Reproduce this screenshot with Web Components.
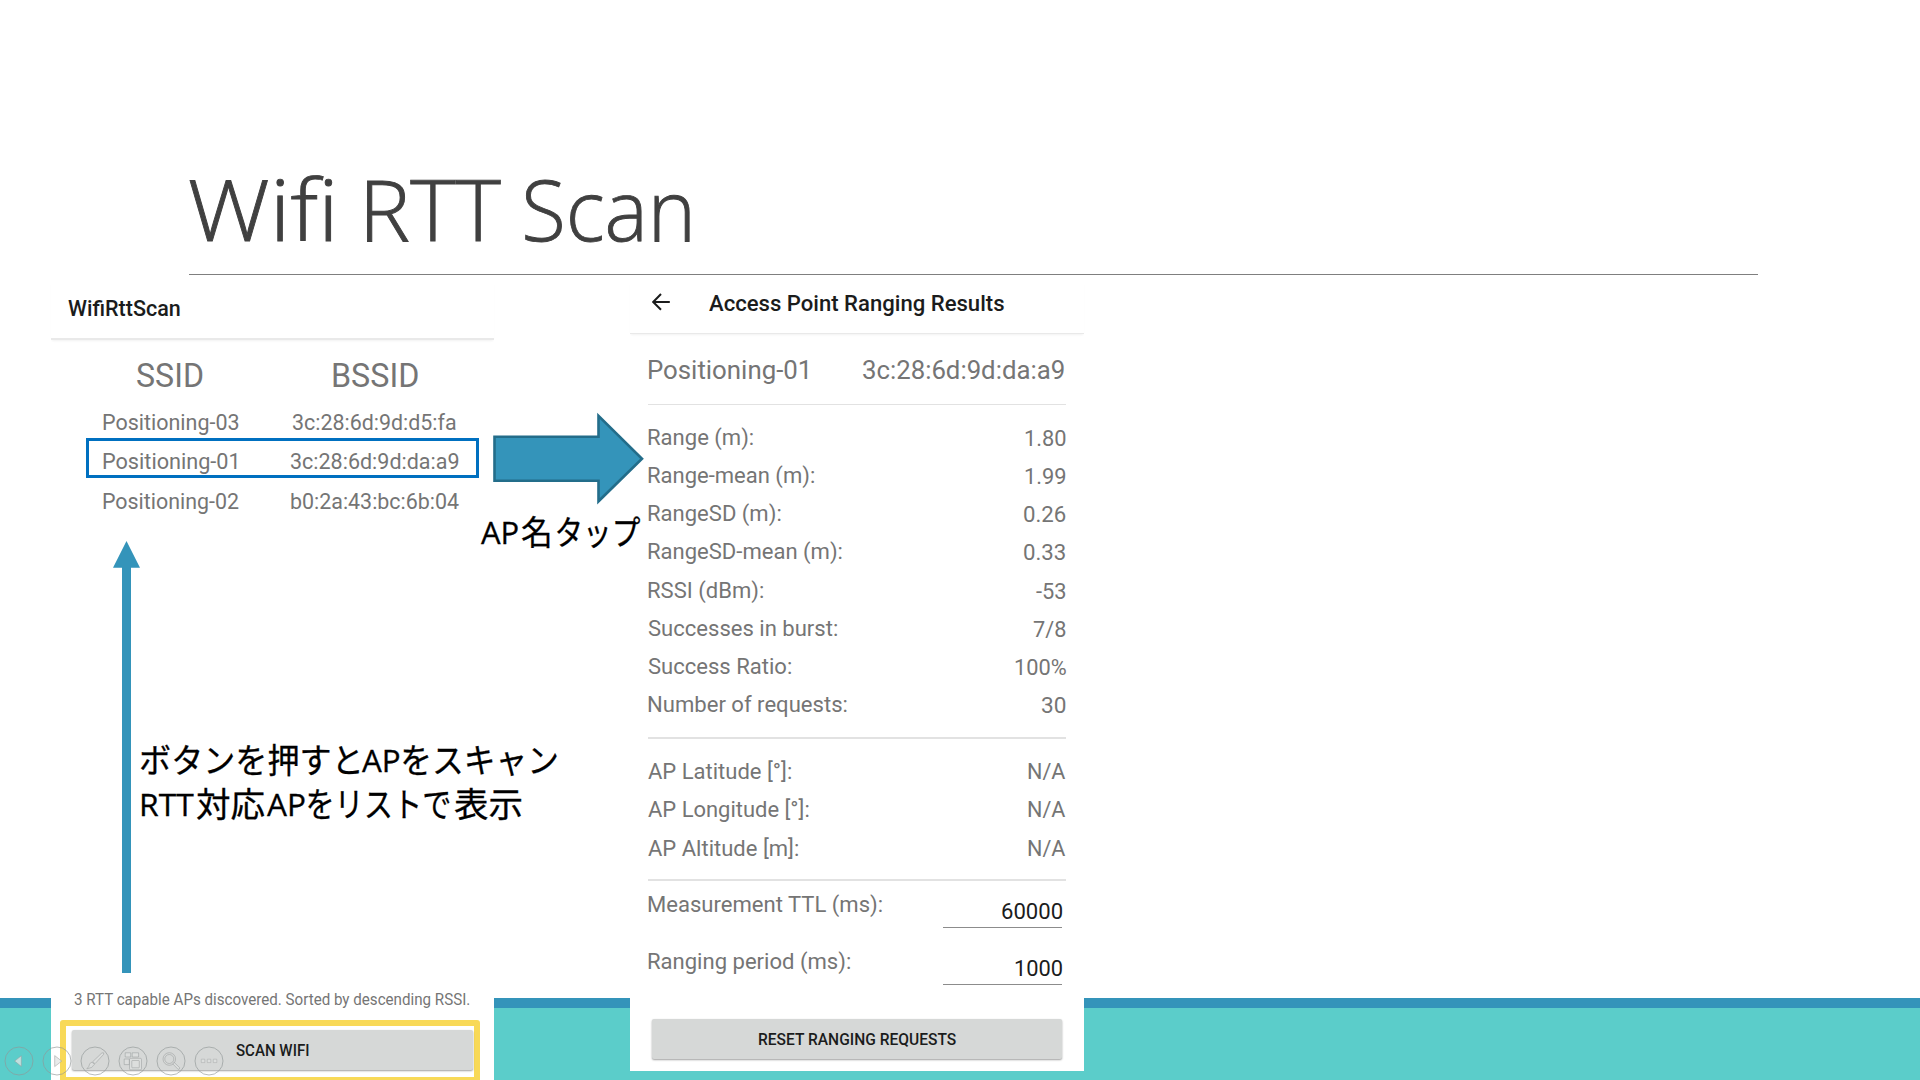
<!DOCTYPE html>
<html lang="ja">
<head>
<meta charset="utf-8">
<title>Wifi RTT Scan</title>
<style>
html,body{margin:0;height:100%;overflow:hidden;background:#fff}
</style>
</head>
<body>
<slide-deck></slide-deck>
<script>
const define = (name, html, setup) => {
  const t = document.createElement('template');
  t.innerHTML = html;
  customElements.define(name, class extends HTMLElement {
    constructor() {
      super();
      this.attachShadow({mode: 'open'}).append(t.content.cloneNode(true));
    }
    connectedCallback() { if (setup) setup(this, this.shadowRoot); }
  });
};

define('slide-deck', `
<style>
:host{display:flex;flex-direction:column;position:relative;width:1920px;height:1080px;overflow:hidden;background:#fff;font-family:Roboto,"Liberation Sans",sans-serif}
header{flex:1;padding:150px 162px 0 188.5px}
header h1{display:flex;margin:0;box-sizing:border-box;padding-left:1.7px;border-bottom:1px solid #7f7f7f;height:125px;color:#404040;font:300 85px "Open Sans",sans-serif;font-variant-ligatures:none;-webkit-text-stroke:.9px #404040}
.bar{height:10px;background:#3494ba}
.base{height:72px;background:#5bcdca}
.obj{position:absolute}
.note{color:#000;font:400 34px Lato,"Noto Sans CJK JP",sans-serif;-webkit-text-stroke:.3px #000}
.line{display:flex}
.l{font-family:"Open Sans",sans-serif;font-size:31.5px}
svg{display:block;overflow:visible}
</style>
<header><h1><fit-text w="142.6" h="124" b="91">Wifi</fit-text> <fit-text style="margin-left:34.6px" w="134.4" h="124" b="91">RTT</fit-text> <fit-text style="margin-left:23px" w="165" h="124" b="91">Scan</fit-text></h1></header>
<div class="bar"></div><div class="base"></div>
<scan-panel class="obj" style="left:51px;top:280px"></scan-panel>
<range-panel class="obj" style="left:630px;top:280px"></range-panel>
<svg class="obj" style="left:493px;top:410px" width="152" height="98" viewBox="0 0 152 98"><path d="M1.5 26.5H105.5V5.5L149 48.5L105.5 91V70.5H1.5Z" transform="translate(0 .3)" fill="#3494ba" stroke="#236d8a" stroke-width="2.6"/></svg>
<svg class="obj" style="left:113px;top:541px" width="27" height="432" viewBox="0 0 27 432"><path d="M13.5 0L27 26.7H18V432H9V26.7H0Z" fill="#3494ba"/></svg>
<div class="obj note line" style="left:481px;top:510px"><fit-text class="l" w="37.3" h="44" b="34.5">AP</fit-text><fit-text style="margin-left:4px" w="28" h="44" b="35">名</fit-text><fit-text style="margin-left:7px" w="83.4" h="44" b="35">タップ</fit-text></div>
<div class="obj note" style="left:141.3px;top:736px">
<div class="line"><fit-text w="218" h="44" b="37">ボタンを押すと</fit-text><fit-text class="l" style="margin-left:3px" w="37.7" h="44" b="36.5">AP</fit-text><fit-text style="margin-left:2.7px" w="154" h="44" b="37">をスキャン</fit-text></div>
<div class="line"><fit-text class="l" style="margin-left:1px" w="52.4" h="44" b="36.5">RTT</fit-text><fit-text style="margin-left:2.3px" w="67" h="44" b="37">対応</fit-text><fit-text class="l" style="margin-left:2.7px" w="38" h="44" b="36.5">AP</fit-text><fit-text style="margin-left:3px" w="141.6" h="44" b="37">をリストで</fit-text><fit-text style="margin-left:4.7px" w="67" h="44" b="37">表示</fit-text></div>
</div>
<slide-controls class="obj" style="left:4px;top:1046px"></slide-controls>
`);

define('app-bar', `
<style>
:host{display:flex;height:var(--bar-h);color:#1b1c1c;font-weight:500;font-size:21.4px;box-sizing:border-box;border-bottom:var(--rule,2px) solid #e9e9e9;box-shadow:0 2px 2px -1px #f2f2f2}
</style><slot></slot>`);

define('raised-button', `
<style>
:host{display:flex;justify-content:center;background:#d6d8d7;border-radius:2px;box-shadow:0 1px 2px rgba(0,0,0,.38);color:#1b1c1c;font-weight:500;font-size:15.8px}
</style><slot></slot>`);

define('scan-panel', `
<style>
:host{display:flex;flex-direction:column;width:443px;height:800px;background:#fff;color:#757575}
app-bar{--bar-h:60px;padding-left:17.4px}
.head{display:flex;font-size:32.6px;height:62px;padding:0 37px 0 35px}
.head>*,ap-row>*{flex:none}
.c1,.c2{display:flex;justify-content:center}
.c1{width:168.5px}.c2{width:241.5px}
.list{display:flex;flex-direction:column;margin-left:35px;width:393px}
.foot{flex:1;display:flex;flex-direction:column;justify-content:flex-end}
.foot>fit-text{font-size:15.9px;margin-left:23.3px}
.frame{height:63px;box-sizing:border-box;width:420px;margin:0 0 -3px 9px;border:6px solid #f8d957;border-radius:3px;padding:4px 1px 0 6px;background:#fff}
</style>
<app-bar><fit-text w="111.9" h="58" b="36.6">WifiRttScan</fit-text></app-bar>
<div class="head"><div class="c1"><fit-text w="65.6" h="62" b="46.7">SSID</fit-text></div><div class="c2"><fit-text w="85" h="62" b="46.7">BSSID</fit-text></div></div>
<div class="list">
<ap-row><fit-text slot="s" w="135.5" h="36" b="27">Positioning-03</fit-text><fit-text slot="b" w="163" h="36" b="27">3c:28:6d:9d:d5:fa</fit-text></ap-row>
<ap-row selected><fit-text slot="s" w="133.6" h="36" b="27.3">Positioning-01</fit-text><fit-text slot="b" w="167.5" h="36" b="27.3">3c:28:6d:9d:da:a9</fit-text></ap-row>
<ap-row><fit-text slot="s" w="136" h="36" b="27.3">Positioning-02</fit-text><fit-text slot="b" w="168" h="36" b="27.3">b0:2a:43:bc:6b:04</fit-text></ap-row>
</div>
<div class="foot"><fit-text w="395.4" h="30" b="15.5">3 RTT capable APs discovered. Sorted by descending RSSI.</fit-text>
<div class="frame"><raised-button><fit-text w="73" h="40" b="26">SCAN WIFI</fit-text></raised-button></div></div>
`);

define('ap-row', `
<style>
:host{display:flex;box-sizing:border-box;height:39.7px;padding:.6px 0 0 0;font-size:21.4px;position:relative}
:host([selected])::after{content:"";position:absolute;left:0;right:0;top:-3.7px;height:34px;border:3px solid #0070c0;width:387px}
.a,.b{display:flex}
.a{width:204.7px;padding-left:16.6px;box-sizing:border-box}
.b{width:168px;justify-content:center}
</style><div class="a"><slot name="s"></slot></div><div class="b"><slot name="b"></slot></div>`);

define('stat-row', `
<style>
:host{display:flex;justify-content:space-between;height:38.25px}
</style>
<fit-text id="l" h="38"></fit-text><fit-text id="v" h="38"></fit-text>`, (el, root) => {
  const g = n => el.getAttribute(n), l = root.getElementById('l'), v = root.getElementById('v');
  l.textContent = g('label'); l.setAttribute('w', g('lw')); l.setAttribute('b', 28.4);
  v.textContent = g('value'); v.setAttribute('w', g('vw')); v.setAttribute('b', g('vb') || 29.6);
});

define('number-field', `
<style>
:host{display:flex;justify-content:space-between;height:57.3px;padding-right:3.5px}
.in{display:flex;justify-content:flex-end;width:119px;height:43px;border-bottom:1.5px solid #8c8c8c;box-sizing:border-box;color:#1b1c1c}
::slotted(:not([slot])){margin-right:.4px}
</style><slot name="label"></slot><div class="in"><slot></slot></div>`);

define('range-panel', `
<style>
:host{display:flex;flex-direction:column;width:454px;height:791px;background:#fff;color:#757575;font-size:21.4px}
app-bar{--bar-h:54px;--rule:1px;gap:39.2px;padding-left:22px}
app-bar svg{flex:none;margin-top:13px}
.body{display:flex;flex-direction:column;padding:0 18px}
.id{display:flex;justify-content:space-between;font-size:25.2px;height:69px;padding-right:2px;margin-left:1.2px}
hr{margin:0;border:0;height:1.5px;background:#e2e2e2;width:100%}
.g{padding:0 .5px 0 .4px}
raised-button{width:410px;margin:0 0 0 4px}
</style>
<app-bar><svg width="18" height="18" viewBox="0 0 18 18"><path d="M17.8 9H1.4M9 1L1.2 9L9 16.8" fill="none" stroke="#1b1c1c" stroke-width="2"/></svg><fit-text w="295.5" h="52" b="31">Access Point Ranging Results</fit-text></app-bar>
<div class="body">
<div class="id"><fit-text w="158" h="69" b="45">Positioning-01</fit-text><fit-text w="201" h="69" b="45">3c:28:6d:9d:da:a9</fit-text></div>
<div style="height:.5px"></div><hr>
<div class="g" style="padding-top:11.5px">
<stat-row label="Range (m):" lw="105" value="1.80" vw="40.5"></stat-row>
<stat-row label="Range-mean (m):" lw="166" value="1.99" vw="40.5"></stat-row>
<stat-row label="RangeSD (m):" lw="132.5" value="0.26" vw="41.2"></stat-row>
<stat-row label="RangeSD-mean (m):" lw="193.7" value="0.33" vw="41.2"></stat-row>
<stat-row label="RSSI (dBm):" lw="115" value="-53" vw="29.5"></stat-row>
<stat-row label="Successes in burst:" lw="189" value="7/8" vw="32.3"></stat-row>
<stat-row label="Success Ratio:" lw="143" value="100%" vw="51"></stat-row>
<stat-row label="Number of requests:" lw="198.7" value="30" vw="23.3"></stat-row>
</div>
<div style="height:14.5px"></div><hr>
<div class="g" style="padding-top:12.7px">
<stat-row label="AP Latitude [°]:" lw="143" value="N/A" vw="37.5" vb="28.5"></stat-row>
<stat-row label="AP Longitude [°]:" lw="160.5" value="N/A" vw="37.5" vb="28.5"></stat-row>
<stat-row label="AP Altitude [m]:" lw="150" value="N/A" vw="37.5" vb="28.5"></stat-row>
</div>
<div style="height:13.2px"></div><hr>
<div class="g" style="padding-top:4px">
<number-field><fit-text slot="label" w="234.3" h="40" b="27.4">Measurement TTL (ms):</fit-text><fit-text w="60" h="40" b="34.5">60000</fit-text></number-field>
<number-field><fit-text slot="label" w="202" h="40" b="27.4">Ranging period (ms):</fit-text><fit-text w="47" h="40" b="34.8">1000</fit-text></number-field>
</div>
<div style="height:19.5px"></div>
<raised-button><fit-text w="197" h="40.5" b="26">RESET RANGING REQUESTS</fit-text></raised-button>
</div>
`);

define('slide-controls', `
<style>
:host{display:flex;gap:8px}
svg{display:block;width:30px;height:30px;fill:none;stroke:rgba(150,153,153,.5);stroke-width:1}
.c{stroke:rgba(145,150,150,.65)}
.f{fill:rgba(225,228,228,.75)}
.h{fill:rgba(225,228,228,.5)}
</style>
<svg viewBox="0 0 30 30"><circle class="c" cx="15" cy="15" r="14"/><path class="f" d="M17.3 9.8V20.4L10.7 15.1Z"/></svg>
<svg viewBox="0 0 30 30"><circle class="c" cx="15" cy="15" r="14"/><path class="f" d="M12.7 9.6V20.6L19.7 15.1Z"/></svg>
<svg viewBox="0 0 30 30"><circle class="c" cx="15" cy="15" r="14"/><path class="h" d="M22 6.8Q24.6 6.2 23.6 8.4L15 17.7L12.7 15.7ZM12 16.2L14.4 18.3Q12.5 22.4 6.8 22.8Q9.2 20.8 9.6 18.2Q10.4 16.4 12 16.2Z"/></svg>
<svg viewBox="0 0 30 30"><circle class="c" cx="15" cy="15" r="14"/><path class="h" d="M7.2 6.8H12.7V11H7.2ZM14.2 6.8H20.6V11H14.2ZM6.2 13H11.3V18.6H6.2Z"/><rect class="h" x="11.5" y="12.3" width="12" height="11.6" rx="1.2"/><rect x="13.8" y="14.5" width="7.5" height="7.3" rx=".6"/></svg>
<svg viewBox="0 0 30 30"><circle class="c" cx="15" cy="15" r="14"/><circle cx="13.3" cy="13" r="6.3"/><circle cx="13.3" cy="13" r="4.5"/><path class="h" d="M16.7 17.8L18.2 16.4L23.6 21.6Q24 23.3 22.2 23.4Z"/></svg>
<svg viewBox="0 0 30 30"><circle class="c" cx="15" cy="15" r="14"/><path class="h" stroke-opacity=".7" d="M7.3 13.2H10.8V16.6H7.3ZM13.3 13.2H16.8V16.6H13.3ZM19.3 13.2H22.8V16.6H19.3Z"/></svg>
`);

/* Text set to an exact ink width (w), with its baseline b px below the top of an h px box. */
const ctx = document.createElement('canvas').getContext('2d');
define('fit-text', `
<style>
:host{display:block;flex:none;white-space:nowrap;line-height:0}
span{display:block;width:max-content;line-height:0;transform-origin:0 0}
</style><span><slot></slot></span>`, (el, root) => {
  const w = +el.getAttribute('w'), h = +el.getAttribute('h'), b = +el.getAttribute('b');
  const cs = getComputedStyle(el);
  ctx.font = `${cs.fontWeight} ${cs.fontSize} ${cs.fontFamily}`;
  const m = ctx.measureText(el.textContent);
  const ink = m.actualBoundingBoxLeft + m.actualBoundingBoxRight;
  const s = w / ink;
  el.style.width = w + 'px';
  el.style.height = h + 'px';
  const off = (m.fontBoundingBoxAscent - m.fontBoundingBoxDescent) / 2;
  root.querySelector('span').style.transform =
    `translate(${m.actualBoundingBoxLeft * s}px,${b - off}px) scaleX(${s})`;
});
</script>
</body>
</html>
